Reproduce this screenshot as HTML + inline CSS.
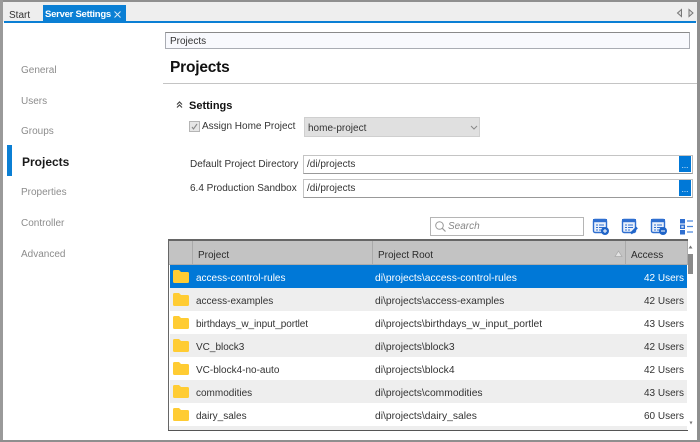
<!DOCTYPE html>
<html>
<head>
<meta charset="utf-8">
<style>
html,body{margin:0;padding:0;background:#fff}
#p{position:relative;width:700px;height:442px;overflow:hidden;background:#fff;font-family:"Liberation Sans",sans-serif;font-size:10px;color:#333}
#p div,#p span.a{position:absolute;white-space:nowrap;box-sizing:border-box}
.nav{left:21px;color:#8c8c8c;font-size:10px;line-height:14px}
.row{left:170px;width:517px;height:23px;line-height:27px;color:#333;font-size:10px}
.row.g{background:#eeeeee}
.row.s{background:#0078d7;color:#fff}
.c1{left:26px}.c2{left:205px;font-size:10.3px}.c3{right:3px}
.row svg{position:absolute;left:2px;top:4px}
.inp{background:#fff;border:1px solid #c4c4c4;border-bottom:1px solid #999;border-right:1px solid #bbb;padding-left:3px;color:#333}
.btn{background:#0078d7;width:12px;height:16px;color:#fff;font-size:8px;line-height:20px;text-align:center}
.h{top:241px;height:24px;line-height:29px;background:#c3c3c3;color:#2a2a2a;border-right:1px solid #aaa;padding-left:5px}
</style>
</head>
<body>
<div id="p">
<div style="left:0;top:0;width:700px;height:22px;background:#eeeeee"></div>
<div style="left:4px;top:21px;width:692px;height:2px;background:#0b7fd4"></div>
<div style="left:9px;top:9px;line-height:14px;color:#333">Start</div>
<div style="left:43px;top:5px;width:83px;height:17px;background:#0b7fd4;color:#fff;font-weight:bold;font-size:9.5px;letter-spacing:-.25px;line-height:20px;padding-left:2px">Server Settings</div>
<svg style="position:absolute;left:113px;top:10px" width="9" height="9"><path d="M1.5 1.5L7.5 7.5M7.5 1.5L1.5 7.5" stroke="#dcecf9" stroke-width="1"/></svg>
<svg style="position:absolute;left:675px;top:8px" width="24" height="10"><path d="M6.5 1.5L2.5 5L6.5 8.5Z" fill="#ddd" stroke="#777"/><path d="M14 1.5L18 5L14 8.5Z" fill="#ddd" stroke="#777"/></svg>

<div style="left:0;top:0;width:700px;height:2px;background:#8f8f8f"></div>
<div style="left:0;top:0;width:3px;height:442px;background:#9a9a9a"></div>
<div style="left:697px;top:0;width:3px;height:442px;background:#8f8f8f"></div>
<div style="left:0;top:440px;width:700px;height:2px;background:#8f8f8f"></div>

<div style="left:165px;top:32px;width:525px;height:17px;background:#f8f9fd;border:1px solid #a9acb3;border-top:1px solid #8a8a8a;line-height:17px;padding-left:4px;font-size:10px;color:#333">Projects</div>
<div style="left:170px;top:58px;font-size:15.5px;letter-spacing:-.2px;font-weight:bold;line-height:20px;color:#111">Projects</div>
<div style="left:163px;top:83px;width:534px;height:1px;background:#c4c4c4"></div>

<div class="nav" style="top:64px">General</div>
<div class="nav" style="top:95px">Users</div>
<div class="nav" style="top:125px">Groups</div>
<div style="left:7px;top:145px;width:5px;height:31px;background:#0b7fd4"></div>
<div style="left:22px;top:155px;font-size:12px;font-weight:bold;line-height:15px;color:#1a1a1a">Projects</div>
<div class="nav" style="top:186px">Properties</div>
<div class="nav" style="top:217px">Controller</div>
<div class="nav" style="top:248px">Advanced</div>

<svg style="position:absolute;left:176px;top:101px" width="7" height="8"><path d="M1 3.5L3.5 1L6 3.5M1 6.5L3.5 4L6 6.5" fill="none" stroke="#444" stroke-width="1.2"/></svg>
<div style="left:189px;top:99px;font-weight:bold;font-size:11px;line-height:14px;color:#111">Settings</div>
<div style="left:189px;top:121px;width:11px;height:11px;background:#e6e6e6;border:1px solid #b5b5b5"></div>
<svg style="position:absolute;left:190px;top:122px" width="9" height="9"><path d="M2 5L3.5 7L7 2" fill="none" stroke="#888" stroke-width="1.1"/></svg>
<div style="left:202px;top:120px;line-height:14px">Assign Home Project</div>
<div style="left:304px;top:117px;width:176px;height:20px;background:#e0e0e0;border:1px solid #cfcfcf;line-height:21px;padding-left:3px;color:#333">home-project</div>
<svg style="position:absolute;left:470px;top:125px" width="8" height="5"><path d="M1 1L4 4L7 1" fill="none" stroke="#888"/></svg>

<div style="left:190px;top:158px;line-height:14px">Default Project Directory</div>
<div style="left:190px;top:182px;line-height:14px">6.4 Production Sandbox</div>
<div class="inp" style="left:303px;top:155px;width:390px;height:19px;line-height:18px">/di/projects</div>
<div class="btn" style="left:679px;top:156px">...</div>
<div class="inp" style="left:303px;top:179px;width:390px;height:19px;line-height:18px">/di/projects</div>
<div class="btn" style="left:679px;top:180px">...</div>

<div style="left:430px;top:217px;width:154px;height:19px;border:1px solid #b5b5b5;background:#fff"></div>
<svg style="position:absolute;left:434px;top:220px" width="13" height="13"><circle cx="5.5" cy="5.5" r="3.8" fill="none" stroke="#999"/><path d="M8.3 8.3L11.5 11.5" stroke="#999" stroke-width="1.2"/></svg>
<div style="left:448px;top:219px;line-height:15px;font-style:italic;color:#888">Search</div>

<svg style="position:absolute;left:592px;top:218px" width="18" height="18"><rect x="1.5" y="1.5" width="13" height="13" rx="1.5" fill="#e9f0fb" stroke="#2f6fd0" stroke-width="1.4"/><rect x="1" y="1" width="14" height="3.2" fill="#2f6fd0"/><path d="M4 7h2M7 7h5M4 9.5h2M7 9.5h5M4 12h2M7 12h3" stroke="#2f6fd0"/><circle cx="13" cy="13" r="4" fill="#1f64c8"/><path d="M11 13h4M13 11v4" stroke="#fff"/></svg>
<svg style="position:absolute;left:621px;top:218px" width="18" height="18"><rect x="1.5" y="1.5" width="13" height="13" rx="1.5" fill="#e9f0fb" stroke="#2f6fd0" stroke-width="1.4"/><rect x="1" y="1" width="14" height="3.2" fill="#2f6fd0"/><path d="M4 7h2M7 7h5M4 9.5h2M7 9.5h5M4 12h2M7 12h2" stroke="#2f6fd0"/><path d="M10 15.5L16 9.5" stroke="#1f64c8" stroke-width="2.4"/></svg>
<svg style="position:absolute;left:650px;top:218px" width="18" height="18"><rect x="1.5" y="1.5" width="13" height="13" rx="1.5" fill="#e9f0fb" stroke="#2f6fd0" stroke-width="1.4"/><rect x="1" y="1" width="14" height="3.2" fill="#2f6fd0"/><path d="M4 7h2M7 7h5M4 9.5h2M7 9.5h5M4 12h2M7 12h3" stroke="#2f6fd0"/><circle cx="13" cy="13" r="4" fill="#1f64c8"/><path d="M11 13h4" stroke="#fff"/></svg>
<svg style="position:absolute;left:679px;top:218px" width="15" height="18"><rect x="1" y="1" width="5" height="4.5" fill="#2f6fd0"/><rect x="1" y="6.5" width="5" height="4.5" fill="#2f6fd0"/><rect x="1" y="12" width="5" height="4.5" fill="#2f6fd0"/><rect x="2.3" y="7.8" width="2.4" height="2" fill="#cfe0f7"/><path d="M8 3h6M8 8.5h6M8 14h6" stroke="#4a86dc" stroke-width="1.3"/></svg>

<div style="left:168px;top:239px;width:520px;height:2px;background:#666"></div>
<div style="left:168px;top:240px;width:1px;height:191px;background:#666"></div>
<div class="h" style="left:169px;width:24px;padding:0"></div>
<div class="h" style="left:193px;width:180px">Project</div>
<div class="h" style="left:373px;width:253px">Project Root</div>
<div class="h" style="left:626px;width:62px">Access</div>
<div style="left:169px;top:264px;width:519px;height:1px;background:#ababab"></div>
<svg style="position:absolute;left:614px;top:250px" width="9" height="8"><path d="M4.5 1L8 6.5H1Z" fill="#e3e3e3" stroke="#aaa" stroke-width=".7"/></svg>

<div class="row s" style="top:265px"><span class="a c1">access-control-rules</span><span class="a c2">di\projects\access-control-rules</span><span class="a c3">42 Users</span><svg width="18" height="15"><path d="M1 2.5Q1 1 2.5 1H7L9 3H15.5Q17 3 17 4.5V12.5Q17 14 15.5 14H2.5Q1 14 1 12.5Z" fill="#ffcc33"/></svg></div>
<div class="row g" style="top:288px"><span class="a c1">access-examples</span><span class="a c2">di\projects\access-examples</span><span class="a c3">42 Users</span><svg width="18" height="15"><path d="M1 2.5Q1 1 2.5 1H7L9 3H15.5Q17 3 17 4.5V12.5Q17 14 15.5 14H2.5Q1 14 1 12.5Z" fill="#ffcc33"/></svg></div>
<div class="row" style="top:311px"><span class="a c1" style="letter-spacing:-.08px">birthdays_w_input_portlet</span><span class="a c2">di\projects\birthdays_w_input_portlet</span><span class="a c3">43 Users</span><svg width="18" height="15"><path d="M1 2.5Q1 1 2.5 1H7L9 3H15.5Q17 3 17 4.5V12.5Q17 14 15.5 14H2.5Q1 14 1 12.5Z" fill="#ffcc33"/></svg></div>
<div class="row g" style="top:334px"><span class="a c1">VC_block3</span><span class="a c2">di\projects\block3</span><span class="a c3">42 Users</span><svg width="18" height="15"><path d="M1 2.5Q1 1 2.5 1H7L9 3H15.5Q17 3 17 4.5V12.5Q17 14 15.5 14H2.5Q1 14 1 12.5Z" fill="#ffcc33"/></svg></div>
<div class="row" style="top:357px"><span class="a c1">VC-block4-no-auto</span><span class="a c2">di\projects\block4</span><span class="a c3">42 Users</span><svg width="18" height="15"><path d="M1 2.5Q1 1 2.5 1H7L9 3H15.5Q17 3 17 4.5V12.5Q17 14 15.5 14H2.5Q1 14 1 12.5Z" fill="#ffcc33"/></svg></div>
<div class="row g" style="top:380px"><span class="a c1">commodities</span><span class="a c2">di\projects\commodities</span><span class="a c3">43 Users</span><svg width="18" height="15"><path d="M1 2.5Q1 1 2.5 1H7L9 3H15.5Q17 3 17 4.5V12.5Q17 14 15.5 14H2.5Q1 14 1 12.5Z" fill="#ffcc33"/></svg></div>
<div class="row" style="top:403px"><span class="a c1">dairy_sales</span><span class="a c2">di\projects\dairy_sales</span><span class="a c3">60 Users</span><svg width="18" height="15"><path d="M1 2.5Q1 1 2.5 1H7L9 3H15.5Q17 3 17 4.5V12.5Q17 14 15.5 14H2.5Q1 14 1 12.5Z" fill="#ffcc33"/></svg></div>
<div style="left:169px;top:426px;width:518px;height:4px;background:#eeeeee"></div>

<div style="left:688px;top:254px;width:5px;height:20px;background:#8a8a8a"></div>
<svg style="position:absolute;left:688px;top:245px" width="5" height="4"><path d="M2.5 0.5L4.5 3.5H0.5Z" fill="#777"/></svg>
<svg style="position:absolute;left:689px;top:421px" width="4" height="4"><path d="M2 3.5L0.5 0.5H3.5Z" fill="#777"/></svg>
<div style="left:168px;top:430px;width:520px;height:1px;background:#555"></div>
</div>
</body>
</html>
